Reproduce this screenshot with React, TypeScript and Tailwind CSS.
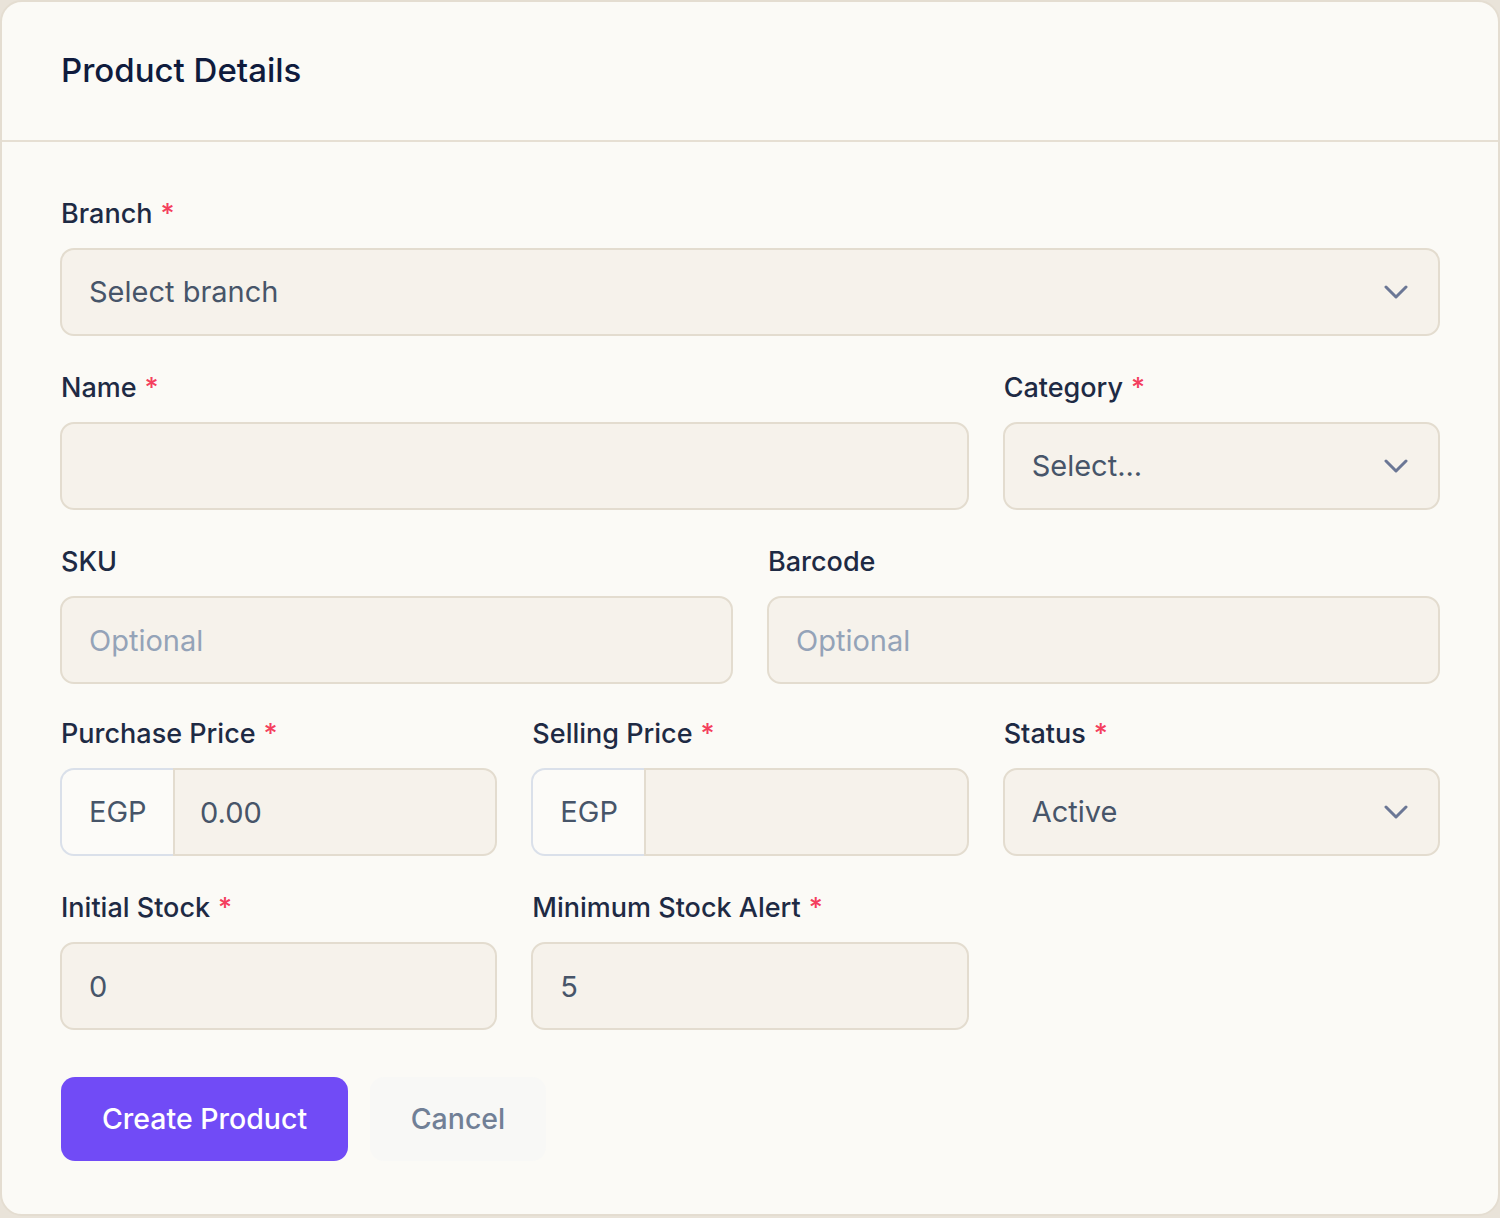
import React from 'react';

const font = { fontFamily: 'Inter, "Noto Sans", sans-serif' };

const Label: React.FC<{ text: string; required?: boolean }> = ({ text, required }) => (
  <label className="block text-[27px] leading-[36px] font-medium text-[#1e2a44] mb-[16px] pl-[1px]">
    {text}
    {required && <span className="ml-[8px] text-[#f43f5e]">*</span>}
  </label>
);

const Chevron = () => (
  <svg width="24" height="14" viewBox="0 0 24 14" fill="none" className="shrink-0">
    <path d="M2 2l10 10L22 2" stroke="#6b7795" strokeWidth="3" strokeLinecap="round" strokeLinejoin="round" />
  </svg>
);

const boxBase =
  'h-[88px] w-full rounded-[14px] border-2 border-[#e3dccf] bg-[#f6f2eb] px-[27px] text-[29px] text-[#475569] outline-none';

const SelectBox: React.FC<{ value: string }> = ({ value }) => (
  <div className={`${boxBase} flex items-center justify-between pr-[30px]`}>
    <span>{value}</span>
    <Chevron />
  </div>
);

const TextBox: React.FC<{ value?: string; placeholder?: string }> = ({ value, placeholder }) => (
  <input
    className={`${boxBase} placeholder:text-[#94a3b8]`}
    style={font}
    defaultValue={value}
    placeholder={placeholder}
  />
);

const PriceBox: React.FC<{ value?: string }> = ({ value }) => (
  <div className="flex h-[88px] w-full">
    <div className="flex w-[113px] shrink-0 items-center rounded-l-[14px] border-2 border-r-0 border-[#dae0ea] bg-[#fcfbf8] pl-[27px] text-[29px] text-[#475569]">
      EGP
    </div>
    <input
      className="h-full min-w-0 flex-1 rounded-r-[14px] border-2 border-[#e3dccf] bg-[#f6f2eb] px-[25px] text-[29px] text-[#475569] outline-none"
      style={font}
      defaultValue={value}
    />
  </div>
);

export default function App() {
  return (
    <div className="min-h-[1218px] bg-[#e9e3d9]" style={font}>
      <div className="rounded-[22px] border-2 border-[#e4ddd1] bg-[#fbfaf6]">
        {/* Header */}
        <div className="flex h-[140px] items-center border-b-2 border-[#e6dfd3] px-[59px]">
          <h1 className="text-[33px] font-medium text-[#0f1b3d]">Product Details</h1>
        </div>

        {/* Form */}
        <div className="flex flex-col gap-[34px] px-[58px] pt-[54px] pb-[53px]">
          <div>
            <Label text="Branch" required />
            <SelectBox value="Select branch" />
          </div>

          <div className="grid grid-cols-3 gap-x-[34px]">
            <div className="col-span-2">
              <Label text="Name" required />
              <TextBox />
            </div>
            <div>
              <Label text="Category" required />
              <SelectBox value="Select..." />
            </div>
          </div>

          <div className="grid grid-cols-2 gap-x-[34px]">
            <div>
              <Label text="SKU" />
              <TextBox placeholder="Optional" />
            </div>
            <div>
              <Label text="Barcode" />
              <TextBox placeholder="Optional" />
            </div>
          </div>

          <div className="-mt-[2px] grid grid-cols-3 gap-x-[34px]">
            <div>
              <Label text="Purchase Price" required />
              <PriceBox value="0.00" />
            </div>
            <div>
              <Label text="Selling Price" required />
              <PriceBox />
            </div>
            <div>
              <Label text="Status" required />
              <SelectBox value="Active" />
            </div>
          </div>

          <div className="grid grid-cols-3 gap-x-[34px]">
            <div>
              <Label text="Initial Stock" required />
              <TextBox value="0" />
            </div>
            <div>
              <Label text="Minimum Stock Alert" required />
              <TextBox value="5" />
            </div>
          </div>

          <div className="mt-[13px] flex items-center gap-[22px]">
            <button className="ml-[1px] h-[84px] w-[287px] rounded-[14px] bg-[#714bf6] text-[28.5px] font-medium text-white">
              Create Product
            </button>
            <button className="h-[84px] w-[176px] rounded-[14px] bg-[#f8f8f6] text-[28.5px] font-medium text-[#718096]">
              Cancel
            </button>
          </div>
        </div>
      </div>
    </div>
  );
}
